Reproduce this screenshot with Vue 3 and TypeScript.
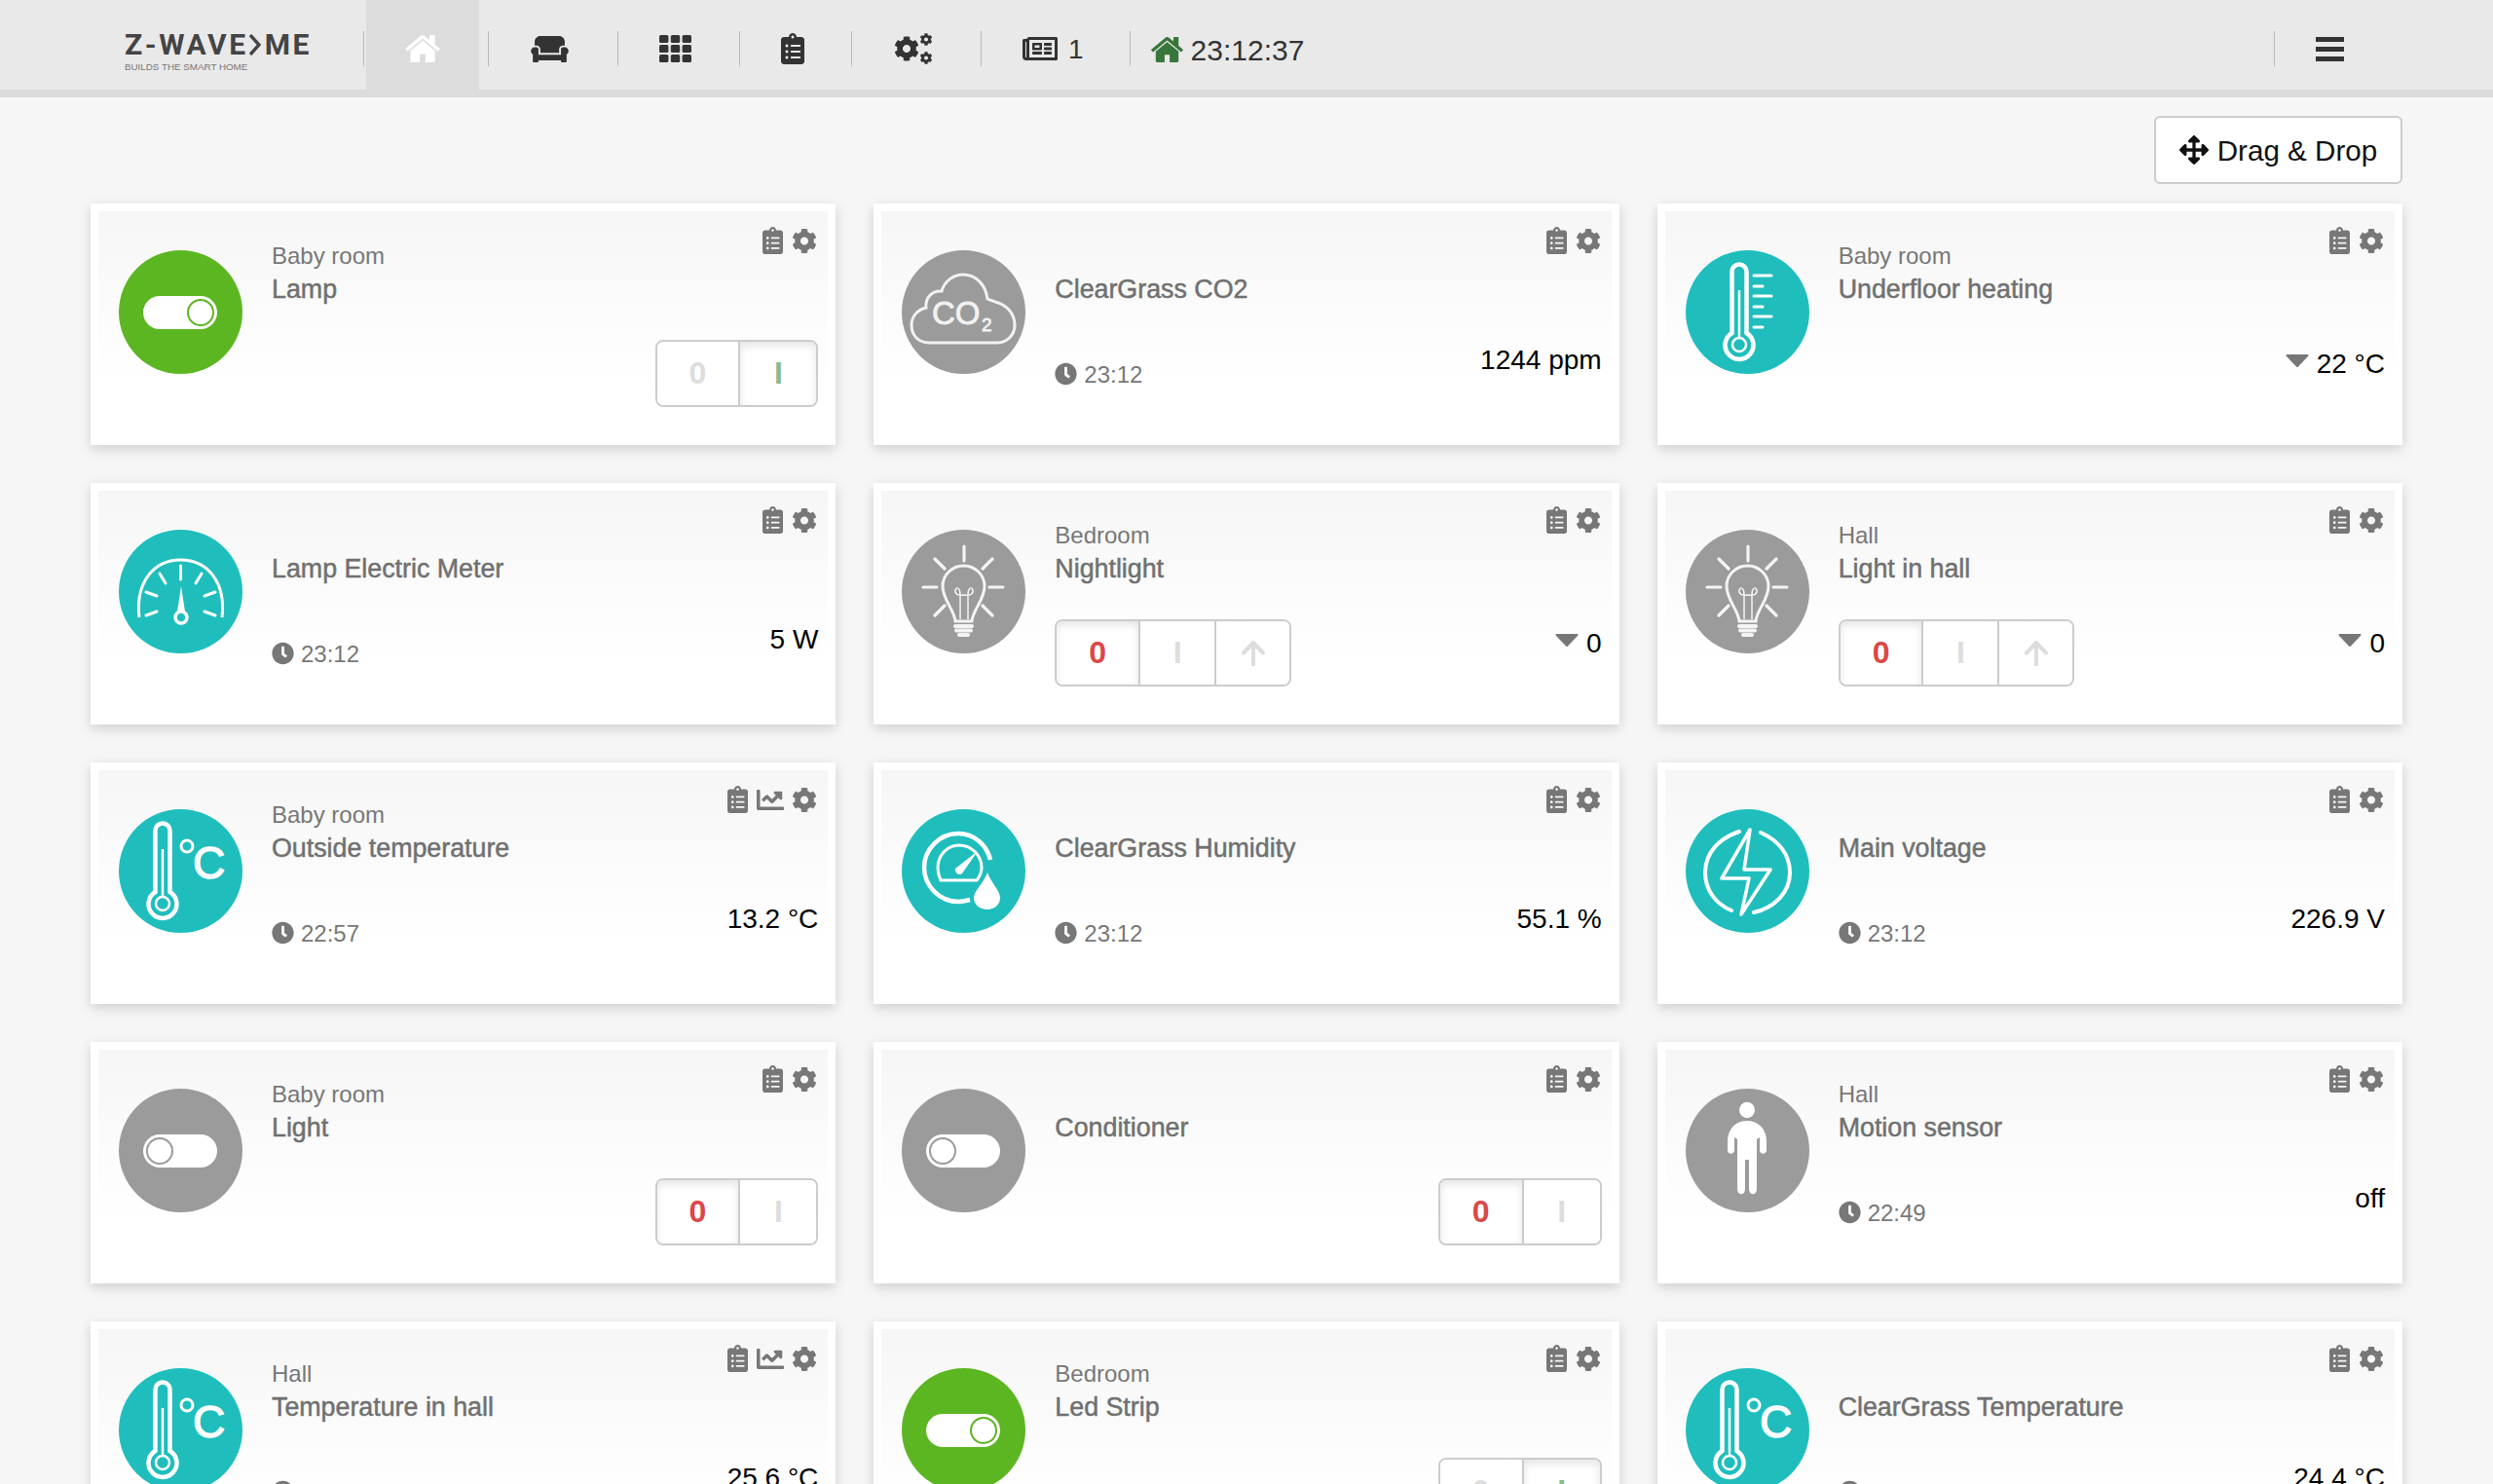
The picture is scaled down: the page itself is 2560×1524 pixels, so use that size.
<script setup lang="ts">
// Dashboard tiles are data-driven; every glyph lives in the hidden sprite below.
interface Btn {
  label: string
  tone: 'idle' | 'red' | 'green'
  active?: boolean
}

interface Tile {
  room?: string
  name: string
  icon: string
  tint: 'teal' | 'green' | 'gray'
  time?: string
  value?: string
  trend?: boolean
  chart?: boolean
  buttons?: Btn[]
  arrow?: boolean
}

const switchOn: Btn[] = [
  { label: '0', tone: 'idle' },
  { label: 'I', tone: 'green', active: true },
]
const switchOff: Btn[] = [
  { label: '0', tone: 'red', active: true },
  { label: 'I', tone: 'idle' },
]

const tiles: Tile[] = [
  { room: 'Baby room', name: 'Lamp', icon: 'toggle-on', tint: 'green', buttons: switchOn },
  { name: 'ClearGrass CO2', icon: 'co2', tint: 'gray', time: '23:12', value: '1244 ppm' },
  { room: 'Baby room', name: 'Underfloor heating', icon: 'thermo', tint: 'teal', value: '22 °C', trend: true },
  { name: 'Lamp Electric Meter', icon: 'meter', tint: 'teal', time: '23:12', value: '5 W' },
  { room: 'Bedroom', name: 'Nightlight', icon: 'bulb', tint: 'gray', buttons: switchOff, arrow: true, value: '0', trend: true },
  { room: 'Hall', name: 'Light in hall', icon: 'bulb', tint: 'gray', buttons: switchOff, arrow: true, value: '0', trend: true },
  { room: 'Baby room', name: 'Outside temperature', icon: 'temp-c', tint: 'teal', time: '22:57', value: '13.2 °C', chart: true },
  { name: 'ClearGrass Humidity', icon: 'humidity', tint: 'teal', time: '23:12', value: '55.1 %' },
  { name: 'Main voltage', icon: 'bolt', tint: 'teal', time: '23:12', value: '226.9 V' },
  { room: 'Baby room', name: 'Light', icon: 'toggle-off', tint: 'gray', buttons: switchOff },
  { name: 'Conditioner', icon: 'toggle-off', tint: 'gray', buttons: switchOff },
  { room: 'Hall', name: 'Motion sensor', icon: 'person', tint: 'gray', time: '22:49', value: 'off' },
  { room: 'Hall', name: 'Temperature in hall', icon: 'temp-c', tint: 'teal', time: '23:12', value: '25.6 °C', chart: true },
  { room: 'Bedroom', name: 'Led Strip', icon: 'toggle-on', tint: 'green', buttons: switchOn },
  { name: 'ClearGrass Temperature', icon: 'temp-c', tint: 'teal', time: '23:12', value: '24.4 °C' },
]
</script>

<template>
  <svg class="sprite" aria-hidden="true">
    <symbol id="ic-home" viewBox="96 256 1600 1280">
      <path d="M1472 992v480q0 26-19 45t-45 19h-384v-384h-256v384h-384q-26 0-45-19t-19-45v-480q0-1 .5-3t.5-3l575-474 575 474q1 2 1 6zm223-69l-62 74q-8 9-21 11h-3q-13 0-21-7l-692-577-692 577q-12 8-24 7-13-2-21-11l-62-74q-8-10-7-23.5t11-21.5l719-599q32-26 76-26t76 26l244 204v-195q0-14 9-23t23-9h192q14 0 23 9t9 23v408l219 182q10 8 11 21.5t-7 23.5z" />
    </symbol>
    <symbol id="ic-couch" viewBox="0 0 640 448">
      <path d="M160 224v64h320v-64c0-35.3 28.7-64 64-64h32V96c0-53-43-96-96-96H160C107 0 64 43 64 96v64h32c35.3 0 64 28.7 64 64zm416-32h-32c-17.7 0-32 14.3-32 32v96H128v-96c0-17.7-14.3-32-32-32H64c-35.3 0-64 28.7-64 64 0 23.6 13 44 32 55.1V432c0 8.8 7.2 16 16 16h64c8.8 0 16-7.2 16-16v-16h384v16c0 8.8 7.2 16 16 16h64c8.8 0 16-7.2 16-16V311.1c19-11.1 32-31.5 32-55.1 0-35.3-28.7-64-64-64z" />
    </symbol>
    <symbol id="ic-clipboard" viewBox="0 0 384 512">
      <path d="M336 64h-80c0-35.3-28.7-64-64-64s-64 28.7-64 64H48C21.5 64 0 85.5 0 112v352c0 26.5 21.5 48 48 48h288c26.5 0 48-21.5 48-48V112c0-26.5-21.5-48-48-48zM96 424c-13.3 0-24-10.7-24-24s10.7-24 24-24 24 10.7 24 24-10.7 24-24 24zm0-96c-13.3 0-24-10.7-24-24s10.7-24 24-24 24 10.7 24 24-10.7 24-24 24zm0-96c-13.3 0-24-10.7-24-24s10.7-24 24-24 24 10.7 24 24-10.7 24-24 24zm96-192c13.3 0 24 10.7 24 24s-10.7 24-24 24-24-10.7-24-24 10.7-24 24-24zm128 368c0 4.4-3.6 8-8 8H168c-4.4 0-8-3.6-8-8v-16c0-4.4 3.6-8 8-8h144c4.4 0 8 3.6 8 8v16zm0-96c0 4.4-3.6 8-8 8H168c-4.4 0-8-3.6-8-8v-16c0-4.4 3.6-8 8-8h144c4.4 0 8 3.6 8 8v16zm0-96c0 4.4-3.6 8-8 8H168c-4.4 0-8-3.6-8-8v-16c0-4.4 3.6-8 8-8h144c4.4 0 8 3.6 8 8v16z" />
    </symbol>
    <symbol id="ic-gear" viewBox="0 0 512 512">
      <path d="M487.4 315.7l-42.6-24.6c4.3-23.2 4.3-47 0-70.2l42.6-24.6c4.9-2.8 7.1-8.6 5.5-14-11.1-35.6-30-67.8-54.7-94.6-3.8-4.1-10-5.1-14.8-2.3L380.8 110c-17.9-15.4-38.5-27.3-60.8-35.1V25.8c0-5.6-3.9-10.5-9.4-11.7-36.7-8.2-74.3-7.8-109.2 0-5.5 1.2-9.4 6.1-9.4 11.7V75c-22.2 7.9-42.8 19.8-60.8 35.1L88.7 85.5c-4.9-2.8-11-1.9-14.8 2.3-24.7 26.7-43.6 58.9-54.7 94.6-1.7 5.4.6 11.2 5.5 14L67.3 221c-4.3 23.2-4.3 47 0 70.2l-42.6 24.6c-4.9 2.8-7.1 8.6-5.5 14 11.1 35.6 30 67.8 54.7 94.6 3.8 4.1 10 5.1 14.8 2.3l42.6-24.6c17.9 15.4 38.5 27.3 60.8 35.1v49.2c0 5.6 3.9 10.5 9.4 11.7 36.7 8.2 74.3 7.8 109.2 0 5.5-1.2 9.4-6.1 9.4-11.7v-49.2c22.2-7.9 42.8-19.8 60.8-35.1l42.6 24.6c4.9 2.8 11 1.9 14.8-2.3 24.7-26.7 43.6-58.9 54.7-94.6 1.5-5.5-.7-11.3-5.6-14.1zM256 336c-44.1 0-80-35.9-80-80s35.9-80 80-80 80 35.9 80 80-35.9 80-80 80z" />
    </symbol>
    <symbol id="ic-chart" viewBox="0 64 512 384">
      <path d="M496 384H64V80c0-8.84-7.16-16-16-16H16C7.16 64 0 71.16 0 80v336c0 17.67 14.33 32 32 32h464c8.84 0 16-7.16 16-16v-32c0-8.84-7.16-16-16-16zM464 96H345.94c-21.38 0-32.09 25.85-16.97 40.97l32.4 32.4L288 242.75l-73.37-73.37c-12.5-12.5-32.76-12.5-45.25 0l-68.69 68.69c-6.25 6.25-6.25 16.38 0 22.63l22.62 22.62c6.25 6.25 16.38 6.25 22.63 0L192 237.25l73.37 73.37c12.5 12.5 32.76 12.5 45.25 0l96-96 32.4 32.4c15.12 15.12 40.97 4.41 40.97-16.97V112c0-8.84-7.16-16-16-16z" />
    </symbol>
    <symbol id="ic-clock" viewBox="0 0 512 512">
      <path d="M256,8C119,8,8,119,8,256S119,504,256,504,504,393,504,256,393,8,256,8Zm92.49,313h0l-20,25a16,16,0,0,1-22.49,2.5h0l-67-49.72a40,40,0,0,1-15-31.23V112a16,16,0,0,1,16-16h32a16,16,0,0,1,16,16V256l58,42.5A16,16,0,0,1,348.49,321Z" />
    </symbol>
    <symbol id="ic-move" viewBox="0 0 512 512">
      <path d="M352.201 425.775l-79.196 79.196c-9.373 9.373-24.568 9.373-33.941 0l-79.196-79.196c-15.119-15.119-4.411-40.971 16.971-40.97h51.162L228 284H127.196v51.162c0 21.382-25.851 32.09-40.971 16.971L7.029 272.937c-9.373-9.373-9.373-24.569 0-33.941L86.225 159.8c15.119-15.119 40.971-4.411 40.971 16.971V228H228V127.196h-51.23c-21.382 0-32.09-25.851-16.971-40.971l79.196-79.196c9.373-9.373 24.568-9.373 33.941 0l79.196 79.196c15.119 15.119 4.411 40.971-16.971 40.971h-51.162V228h100.804v-51.162c0-21.382 25.851-32.09 40.97-16.971l79.196 79.196c9.373 9.373 9.373 24.569 0 33.941L425.773 352.2c-15.119 15.119-40.971 4.411-40.97-16.971V284H284v100.804h51.23c21.382 0 32.09 25.851 16.971 40.971z" />
    </symbol>
    <symbol id="ic-news" viewBox="0 64 576 384">
      <path d="M552 64H112c-20.858 0-38.643 13.377-45.248 32H24c-13.255 0-24 10.745-24 24v272c0 30.928 25.072 56 56 56h496c13.255 0 24-10.745 24-24V88c0-13.255-10.745-24-24-24zM48 392V144h16v248c0 4.411-3.589 8-8 8s-8-3.589-8-8zm480 8H111.422c.374-2.614.578-5.283.578-8V112h416v288zM172 280h136c6.627 0 12-5.373 12-12v-96c0-6.627-5.373-12-12-12H172c-6.627 0-12 5.373-12 12v96c0 6.627 5.373 12 12 12zm28-80h80v40h-80v-40zm-40 140v-24c0-6.627 5.373-12 12-12h136c6.627 0 12 5.373 12 12v24c0 6.627-5.373 12-12 12H172c-6.627 0-12-5.373-12-12zm192 0v-24c0-6.627 5.373-12 12-12h104c6.627 0 12 5.373 12 12v24c0 6.627-5.373 12-12 12H364c-6.627 0-12-5.373-12-12zm0-144v-24c0-6.627 5.373-12 12-12h104c6.627 0 12 5.373 12 12v24c0 6.627-5.373 12-12 12H364c-6.627 0-12-5.373-12-12zm0 72v-24c0-6.627 5.373-12 12-12h104c6.627 0 12 5.373 12 12v24c0 6.627-5.373 12-12 12H364c-6.627 0-12-5.373-12-12z" />
    </symbol>

    <symbol id="dev-toggle-on" viewBox="0 0 127 127">
      <rect x="25" y="47" width="76" height="34" rx="17" fill="#fff" />
      <circle cx="84" cy="64" r="13" fill="#fff" stroke="#5cb622" stroke-width="2" />
    </symbol>
    <symbol id="dev-toggle-off" viewBox="0 0 127 127">
      <rect x="25" y="47" width="76" height="34" rx="17" fill="#fff" />
      <circle cx="42" cy="64" r="13" fill="#fff" stroke="#9b9b9b" stroke-width="2" />
    </symbol>
    <symbol id="dev-co2" viewBox="0 0 127 127">
      <path d="M28 95C16 95 10 86 10 77C10 68 16 61 25 59C24 49 31 41 41 42C44 31 54 25 63 25C76 25 86 35 88 50C90 51 94 52 96 53C107 56 116 64 116 77C116 87 108 95 98 95Z" fill="none" stroke="#f2f2f2" stroke-width="3" />
    </symbol>
    <symbol id="dev-thermo" viewBox="0 0 127 127">
      <path d="M47.5 22a7.5 7.5 0 0 1 15 0V85a14.5 14.5 0 1 1-15 0Z" fill="none" stroke="#fff" stroke-width="4.5" />
      <path d="M55 41V90" stroke="#fff" stroke-width="2.5" />
      <circle cx="55" cy="97" r="7" fill="none" stroke="#fff" stroke-width="2.5" />
      <path d="M70 26H88M70 37H79M70 47H88M70 58H79M70 68H88M70 79H79" stroke="#fff" stroke-width="3" stroke-linecap="round" />
    </symbol>
    <symbol id="dev-temp-c" viewBox="0 0 127 127">
      <path d="M37.5 22a7.5 7.5 0 0 1 15 0V85a14.5 14.5 0 1 1-15 0Z" fill="none" stroke="#fff" stroke-width="4.5" />
      <path d="M45 41V90" stroke="#fff" stroke-width="2.5" />
      <circle cx="45" cy="97" r="7" fill="none" stroke="#fff" stroke-width="2.5" />
      <circle cx="70" cy="38" r="6" fill="none" stroke="#fff" stroke-width="3" />
    </symbol>
    <symbol id="dev-meter" viewBox="0 0 127 127">
      <path d="M21 90C17 55 35 31 63.5 31C92 31 110 55 106 90" fill="none" stroke="#fff" stroke-width="3" />
      <path d="M63.5 37V51M42 45L48 55M85 45L79 55M28 64L39 68M99 64L88 68M28 88L39 84M99 88L88 84" stroke="#fff" stroke-width="3" stroke-linecap="round" />
      <path d="M64 58L68 84H60Z" fill="#fff" />
      <circle cx="64" cy="90" r="6" fill="none" stroke="#fff" stroke-width="3.5" />
    </symbol>
    <symbol id="dev-bulb" viewBox="0 0 127 127">
      <path d="M64 17V32M34 30L44 40M93 30L83 40M22 59H36M90 59H104M44 78L34 88M83 78L93 88" stroke="#f4f4f4" stroke-width="3.2" stroke-linecap="round" />
      <path d="M55 94C54 82 42 72 42 58C42 46 52 37 63.5 37C75 37 85 46 85 58C85 72 73 82 72 94Z" fill="none" stroke="#f4f4f4" stroke-width="3" />
      <path d="M60 92V66C60 60 56 58 55 62C54 66 58 68 64 67C70 68 74 66 73 62C72 58 68 60 68 66V92" fill="none" stroke="#f4f4f4" stroke-width="1.5" />
      <path d="M55 99H72M56 103.500H71M59 108H68" stroke="#f4f4f4" stroke-width="4" stroke-linecap="round" />
    </symbol>
    <symbol id="dev-humidity" viewBox="0 0 127 127">
      <path d="M91 52C87 36 74 25 58 25C39 25 23 41 23 60C23 79 39 95 58 95C62 95 66 94 70 93" fill="none" stroke="#fff" stroke-width="4.5" />
      <path d="M40 73C38 69 37 65 37 60C37 47 47 37 59 37C71 37 82 47 82 60C82 65 80 69 77 73Z" fill="none" stroke="#fff" stroke-width="3" />
      <path d="M78 43L62 66C59 69 54 65 55 61Z" fill="#fff" />
      <path d="M88 65C92 76 101 84 101 91C101 98 95 103 88 103C80 103 74 98 74 91C74 84 84 76 88 65Z" fill="#fff" />
    </symbol>
    <symbol id="dev-bolt" viewBox="0 0 127 127">
      <path d="M66 21L37 71H65L57 108L87 62H60Z" fill="none" stroke="#fff" stroke-width="3.5" stroke-linejoin="round" />
      <path d="M55 23C34 30 20 45 20 65C20 84 32 98 47 104M77 24C95 32 107 46 107 65C107 85 92 101 70 106" fill="none" stroke="#fff" stroke-width="4" stroke-linecap="round" />
    </symbol>
    <symbol id="dev-person" viewBox="0 0 127 127">
      <ellipse cx="63" cy="22" rx="8" ry="8.3" fill="#fff" />
      <path d="M63 33C75 33 83 42 83 54V63C83 68 76 68 76 63V50L73 52V103C73 110 65 110 65 103V73H61V103C61 110 53 110 53 103V52L50 50V63C50 68 43 68 43 63V54C43 42 51 33 63 33Z" fill="#fff" />
    </symbol>
  </svg>

  <div class="page">
    <header class="navbar">
      <div class="logo">
        <div class="logo-mark">
          <span>Z-WAVE</span>
          <svg class="logo-chevron" viewBox="0 0 12 22">
            <path d="M1 1L10 11L1 21" fill="none" stroke="#444" stroke-width="3.4" />
          </svg>
          <span>ME</span>
        </div>
        <div class="logo-sub">BUILDS THE SMART HOME</div>
      </div>
      <i class="sep"></i>
      <a class="nav-home">
        <svg class="ic-home"><use href="#ic-home" /></svg>
      </a>
      <i class="sep"></i>
      <a class="nav-item"><svg class="ic-couch"><use href="#ic-couch" /></svg></a>
      <i class="sep"></i>
      <a class="nav-item">
        <svg class="ic-grid" viewBox="0 0 33 28">
          <rect v-for="n in 9" :key="n" :x="((n - 1) % 3) * 11.8" :y="Math.floor((n - 1) / 3) * 10" width="9.4" height="8" rx="1.6" />
        </svg>
      </a>
      <i class="sep"></i>
      <a class="nav-item nav-clip"><svg class="ic-clip"><use href="#ic-clipboard" /></svg></a>
      <i class="sep"></i>
      <a class="nav-item">
        <svg class="ic-cogs" viewBox="0 0 41 32">
          <use href="#ic-gear" x="0" y="3" width="28" height="26" />
          <use href="#ic-gear" x="27" y="0" width="14" height="13" />
          <use href="#ic-gear" x="27" y="19" width="14" height="13" />
        </svg>
      </a>
      <i class="sep"></i>
      <a class="nav-item nav-news">
        <svg class="ic-news"><use href="#ic-news" /></svg>
        <span>1</span>
      </a>
      <i class="sep"></i>
      <div class="nav-clock">
        <svg class="ic-home-small"><use href="#ic-home" /></svg>
        <span>23:12:37</span>
      </div>
      <i class="sep sep-end"></i>
      <a class="nav-burger"><span></span><span></span><span></span></a>
    </header>

    <div class="toolbar">
      <button class="drag-btn">
        <svg class="ic-move"><use href="#ic-move" /></svg>
        <span>Drag &amp; Drop</span>
      </button>
    </div>

    <main class="tiles">
      <article v-for="tile in tiles" :key="tile.name" class="tile">
        <div class="tile-body">
          <div class="tile-actions">
            <svg class="ic-action-clip"><use href="#ic-clipboard" /></svg>
            <svg v-if="tile.chart" class="ic-action-chart"><use href="#ic-chart" /></svg>
            <svg class="ic-action-gear"><use href="#ic-gear" /></svg>
          </div>

          <div class="device" :class="tile.tint">
            <svg class="device-ic" viewBox="0 0 127 127">
              <use :href="'#dev-' + tile.icon" width="127" height="127" />
              <template v-if="tile.icon === 'co2'">
                <text x="31" y="76" class="co2-text" font-size="33">CO</text>
                <text x="82" y="83" class="co2-text" font-size="19">2</text>
              </template>
              <text v-if="tile.icon === 'temp-c'" x="76" y="71" class="unit-text" font-size="46">C</text>
            </svg>
          </div>

          <div class="tile-main">
            <div class="room">{{ tile.room }}&nbsp;</div>
            <div class="name">{{ tile.name }}</div>
            <div class="tile-foot">
              <div v-if="tile.time" class="updated">
                <svg class="ic-clock"><use href="#ic-clock" /></svg>
                <span>{{ tile.time }}</span>
              </div>
              <div v-if="tile.buttons" class="btn-group" :class="{ pushed: !tile.value }">
                <button
                  v-for="b in tile.buttons"
                  :key="b.label"
                  class="btn"
                  :class="[b.tone, { active: b.active }]"
                >
                  {{ b.label }}
                </button>
                <button v-if="tile.arrow" class="btn btn-arrow">
                  <svg viewBox="0 0 26 26">
                    <path d="M13 25V3M3 12.5L13 2L23 12.5" fill="none" stroke="#ddd" stroke-width="4" stroke-linecap="round" stroke-linejoin="round" />
                  </svg>
                </button>
              </div>
              <div v-if="tile.value" class="value" :class="{ 'with-trend': tile.trend }">
                <svg v-if="tile.trend" class="trend" viewBox="0 0 24 13">
                  <path d="M1.500 1H22.500L12 12Z" stroke-width="2" stroke-linejoin="round" />
                </svg>
                <span>{{ tile.value }}</span>
              </div>
            </div>
          </div>
        </div>
      </article>
    </main>
  </div>
</template>

<style>
html,
body {
  margin: 0;
  height: 100%;
  overflow: hidden;
  background: #f6f6f6;
}
</style>

<style scoped>
.sprite {
  position: absolute;
  width: 0;
  height: 0;
}

.page {
  height: 1524px;
  overflow: hidden;
  font-family: "Liberation Sans", Arial, sans-serif;
  background: #f6f6f6;
}

/* top bar */
.navbar {
  display: flex;
  align-items: center;
  box-sizing: border-box;
  height: 100px;
  padding: 0 153px 0 128px;
  background: #e9e9e9;
  box-shadow: inset 0 -8px 0 #dcdcdc, inset 0 -1px 0 #ededed;
  color: #333;
}

.logo {
  box-sizing: border-box;
  width: 245px;
  padding-top: 8px;
  color: #444;
}

.logo-mark {
  display: flex;
  align-items: center;
  gap: 1px;
  height: 24px;
  font-family: Roboto, "Liberation Sans", sans-serif;
  font-size: 30px;
  font-weight: 700;
  letter-spacing: 2.6px;
  white-space: nowrap;
}

.logo-chevron {
  width: 12px;
  height: 22px;
  margin-right: 3px;
}

.logo-sub {
  margin-top: 5px;
  font-family: "Liberation Sans", sans-serif;
  font-size: 9.8px;
  line-height: 12px;
  color: #777;
  white-space: nowrap;
}

.sep {
  flex: none;
  width: 1px;
  height: 36px;
  background: #b9b9b9;
}

.sep-end {
  margin-left: auto;
}

.nav-home {
  display: flex;
  align-items: center;
  justify-content: center;
  align-self: stretch;
  flex: none;
  width: 116px;
  margin: 0 9px 0 2px;
  background: #dcdcdc;
}

.ic-home {
  width: 36px;
  height: 28px;
  fill: #fff;
}

.nav-item {
  display: flex;
  align-items: center;
  flex: none;
  padding: 0 49px 0 42px;
}

.nav-clip {
  padding-right: 48px;
}

.ic-couch {
  width: 41px;
  height: 27px;
  fill: #333;
}

.ic-grid {
  width: 33px;
  height: 28px;
  fill: #333;
}

.ic-clip {
  width: 24px;
  height: 32px;
  fill: #333;
}

.ic-cogs {
  width: 41px;
  height: 32px;
  fill: #333;
}

.nav-news {
  gap: 11px;
  padding-right: 47px;
  font-size: 28px;
}

.nav-news span {
  padding-top: 2px;
}

.ic-news {
  width: 36px;
  height: 24px;
  fill: #333;
}

.nav-clock {
  display: flex;
  align-items: center;
  gap: 8px;
  padding-left: 21px;
  font-size: 30px;
}

.nav-clock span {
  padding-top: 3px;
}

.ic-home-small {
  width: 33px;
  height: 26px;
  margin-top: 2px;
  fill: #38763a;
}

.nav-burger {
  display: flex;
  flex-direction: column;
  gap: 5px;
  width: 29px;
  margin-left: 42px;
}

.nav-burger span {
  height: 5px;
  background: #333;
}

/* toolbar */
.toolbar {
  display: flex;
  justify-content: flex-end;
  padding: 19px 93px 20px;
}

.drag-btn {
  display: flex;
  align-items: center;
  justify-content: center;
  gap: 9px;
  box-sizing: border-box;
  width: 255px;
  height: 70px;
  padding: 0;
  background: #fff;
  border: 2px solid #ccc;
  border-radius: 6px;
  font-family: inherit;
  font-size: 29.6px;
  color: #111;
}

.drag-btn span {
  padding-top: 2px;
}

.ic-move {
  width: 30px;
  height: 30px;
  fill: #111;
}

/* tiles */
.tiles {
  display: grid;
  grid-template-columns: repeat(3, 1fr);
  gap: 39px;
  padding: 0 93px;
}

.tile {
  box-sizing: border-box;
  height: 248px;
  padding: 8px;
  background: #fff;
  box-shadow: 0 4px 12px rgba(0, 0, 0, 0.16);
}

.tile-body {
  position: relative;
  display: flex;
  box-sizing: border-box;
  height: 232px;
  padding: 28px 10px 0 21px;
  background: linear-gradient(180deg, #f6f6f6 0%, #fff 75%);
}

.tile-actions {
  position: absolute;
  top: 16px;
  right: 11px;
  display: flex;
  align-items: center;
  gap: 9px;
}

.ic-action-clip {
  width: 21px;
  height: 28px;
  fill: #777;
}

.ic-action-chart {
  width: 28px;
  height: 21px;
  margin-right: -1px;
  fill: #777;
}

.ic-action-gear {
  width: 26px;
  height: 27px;
  fill: #777;
}

.device {
  flex: none;
  width: 127px;
  height: 127px;
  margin-top: 12px;
  border-radius: 50%;
}

.device.teal {
  background: #1fbebd;
}

.device.green {
  background: #5cb622;
}

.device.gray {
  background: #9b9b9b;
}

.device-ic {
  display: block;
  width: 127px;
  height: 127px;
}

.co2-text {
  font-family: "Liberation Sans", sans-serif;
  fill: #f2f2f2;
  stroke: #f2f2f2;
  stroke-width: 0.8px;
}

.unit-text {
  font-family: "Liberation Sans", sans-serif;
  fill: #fff;
  stroke: #fff;
  stroke-width: 1.4px;
}

.tile-main {
  display: flex;
  flex-direction: column;
  flex: 1;
  min-width: 0;
  margin-left: 30px;
  padding-top: 1px;
}

.room {
  font-size: 24px;
  line-height: 34px;
  color: #777;
}

.name {
  font-size: 26.8px;
  line-height: 34px;
  color: #707070;
  -webkit-text-stroke: 0.5px #707070;
}

.tile-foot {
  display: flex;
  justify-content: space-between;
  height: 69px;
  margin-top: 35px;
}

.updated {
  display: flex;
  align-items: center;
  gap: 7px;
  padding-top: 1px;
  font-size: 24px;
  color: #777;
}

.updated span {
  padding-top: 1px;
}

.ic-clock {
  width: 23px;
  height: 24px;
  fill: #777;
}

.value {
  display: flex;
  align-items: flex-start;
  margin-top: 4px;
  margin-left: auto;
  font-size: 28px;
  line-height: 34px;
  color: #000;
}

.value.with-trend {
  gap: 8px;
  margin-top: 8px;
}

.trend {
  width: 24px;
  height: 13px;
  margin-top: 7px;
  fill: #777;
  stroke: #777;
}

.btn-group {
  display: flex;
  box-sizing: border-box;
  height: 69px;
  overflow: hidden;
  background: #fff;
  border: 2px solid #ccc;
  border-radius: 8px;
}

.btn-group.pushed {
  margin-left: auto;
}

.btn {
  min-width: 78px;
  padding: 0 33px;
  background: #fff;
  border: 0;
  border-right: 2px solid #ccc;
  font-family: inherit;
  font-size: 32px;
  font-weight: 700;
}

.btn:last-child {
  border-right: 0;
}

.btn.idle {
  color: #ddd;
}

.btn.red {
  color: #d9484a;
}

.btn.green {
  color: #8ab98a;
}

.btn.active {
  box-shadow: inset 0 4px 8px rgba(0, 0, 0, 0.11);
}

.btn-arrow {
  display: flex;
  align-items: center;
  justify-content: center;
  min-width: 0;
  width: 75px;
  padding: 0;
}

.btn-arrow svg {
  width: 26px;
  height: 26px;
}
</style>
